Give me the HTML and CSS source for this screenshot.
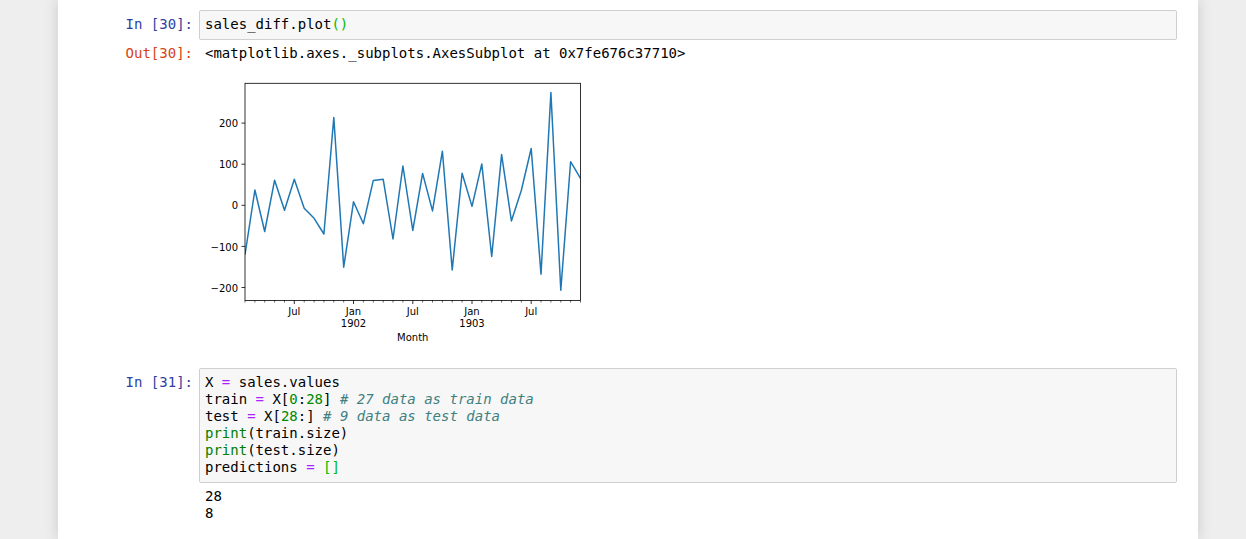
FILE: index.html
```html
<!DOCTYPE html>
<html>
<head>
<meta charset="utf-8">
<title>Notebook</title>
<link rel="stylesheet" href="styles.css">
</head>
<body>
<div class="notebook">
  <div class="cell">
    <div class="row">
      <div class="prompt in-prompt">In [30]:</div>
      <div class="input-area"><pre class="code">sales_diff.plot<span class="mb">()</span></pre></div>
    </div>
    <div class="row">
      <div class="prompt out-prompt">Out[30]:</div>
      <div class="output-text"><pre class="code">&lt;matplotlib.axes._subplots.AxesSubplot at 0x7fe676c37710&gt;</pre></div>
    </div>
    <div class="row">
      <div class="prompt"></div>
      <div class="output-image">
        <svg class="plot" width="390" height="278" viewBox="205 72 390 278" xmlns="http://www.w3.org/2000/svg">
          <defs>
            <clipPath id="ax"><rect x="245" y="83.3" width="335.5" height="217.2"/></clipPath>
          </defs>
          <polyline clip-path="url(#ax)" fill="none" stroke="#1f77b4" stroke-width="1.5" stroke-linejoin="round" points="245.0,254.7 254.9,190.0 264.7,231.5 274.6,180.2 284.5,210.2 294.3,179.3 304.2,208.3 314.1,218.3 323.9,234.0 333.8,117.5 343.7,267.2 353.5,201.8 363.4,223.7 373.3,180.4 383.2,179.3 393.0,239.0 402.9,166.0 412.8,230.4 422.6,173.4 432.5,210.9 442.4,151.2 452.2,269.9 462.1,173.3 472.0,206.4 481.8,163.9 491.7,256.5 501.6,154.6 511.4,220.9 521.3,190.5 531.2,148.5 541.0,274.3 550.9,92.5 560.8,290.3 570.6,161.7 580.5,178.3"/>
          <rect x="245" y="83.3" width="335.5" height="217.2" fill="none" stroke="#000" stroke-width="0.8"/>
          <path stroke="#000" stroke-width="0.8" fill="none" d="M241.5 123.1h3.5M241.5 164.2h3.5M241.5 205.3h3.5M241.5 246.4h3.5M241.5 287.5h3.5M294.3 300.5v3.5M353.5 300.5v3.5M412.8 300.5v3.5M472.0 300.5v3.5M531.2 300.5v3.5"/>
          <path stroke="#000" stroke-width="0.6" fill="none" d="M245.0 300.5v2M254.9 300.5v2M264.7 300.5v2M274.6 300.5v2M284.5 300.5v2M304.2 300.5v2M314.1 300.5v2M323.9 300.5v2M333.8 300.5v2M343.7 300.5v2M363.4 300.5v2M373.3 300.5v2M383.2 300.5v2M393.0 300.5v2M402.9 300.5v2M422.6 300.5v2M432.5 300.5v2M442.4 300.5v2M452.2 300.5v2M462.1 300.5v2M481.8 300.5v2M491.7 300.5v2M501.6 300.5v2M511.4 300.5v2M521.3 300.5v2M541.0 300.5v2M550.9 300.5v2M560.8 300.5v2M570.6 300.5v2M580.5 300.5v2"/>
          <g class="tick-text" text-anchor="end">
            <text x="238" y="127.2">200</text>
            <text x="238" y="168.3">100</text>
            <text x="238" y="209.4">0</text>
            <text x="238" y="250.5">−100</text>
            <text x="238" y="291.6">−200</text>
          </g>
          <g class="tick-text" text-anchor="middle">
            <text x="294.3" y="315.1">Jul</text>
            <text x="353.5" y="315.1">Jan</text>
            <text x="353.5" y="326.6">1902</text>
            <text x="412.8" y="315.1">Jul</text>
            <text x="472.0" y="315.1">Jan</text>
            <text x="472.0" y="326.6">1903</text>
            <text x="531.2" y="315.1">Jul</text>
            <text x="412.75" y="340.8">Month</text>
          </g>
        </svg>
      </div>
    </div>
  </div>
  <div class="cell">
    <div class="row">
      <div class="prompt in-prompt">In [31]:</div>
      <div class="input-area"><pre class="code">X <span class="op">=</span> sales.values
train <span class="op">=</span> X[<span class="num">0</span>:<span class="num">28</span>] <span class="cm"># 27 data as train data</span>
test <span class="op">=</span> X[<span class="num">28</span>:] <span class="cm"># 9 data as test data</span>
<span class="bi">print</span>(train.size)
<span class="bi">print</span>(test.size)
predictions <span class="op">=</span> <span class="mb">[]</span></pre></div>
    </div>
    <div class="row">
      <div class="prompt"></div>
      <div class="output-text"><pre class="code">28
8</pre></div>
    </div>
  </div>
</div>
</body>
</html>
```

FILE: styles.css
```css
html, body {
  margin: 0;
  padding: 0;
  background: #eeeeee;
  height: 100%;
}

body {
  overflow: hidden;
}

.notebook {
  width: 1140px;
  min-height: 100%;
  box-sizing: border-box;
  margin-left: 58px;
  padding: 4px 15px 0;
  background: #ffffff;
  box-shadow: 0 0 12px 1px rgba(87, 87, 87, 0.2);
}

.cell {
  padding: 6px;
  display: flex;
  flex-direction: column;
}

.row {
  display: flex;
  align-items: flex-start;
}

.prompt {
  flex: 0 0 120px;
  box-sizing: border-box;
  padding-right: 6px;
  text-align: right;
  font-family: "DejaVu Sans Mono", monospace;
  font-size: 14px;
  line-height: 17px;
}

.in-prompt {
  color: #303F9F;
  padding-top: 6px;
}

.out-prompt {
  color: #D84315;
  padding-top: 5px;
}

.code {
  margin: 0;
  font-family: "DejaVu Sans Mono", monospace;
  font-size: 14px;
  line-height: 17px;
  color: #000;
  white-space: pre;
}

.input-area {
  flex: 1;
  border: 1px solid #cfcfcf;
  border-radius: 2px;
  background: #f7f7f7;
  padding: 5px 5px 6px;
}

.output-text {
  flex: 1;
  padding: 5px 0 5px 6px;
}

.output-image {
  flex: 1;
  padding: 5px 0 6px 6px;
}

.plot {
  display: block;
}

.tick-text text {
  font-family: "DejaVu Sans", sans-serif;
  font-size: 10px;
  fill: #000;
}

.op { color: #AA22FF; }
.num { color: #008800; }
.bi { color: #008000; }
.cm { color: #408080; font-style: italic; }
.mb { color: #00bb00; }
```
